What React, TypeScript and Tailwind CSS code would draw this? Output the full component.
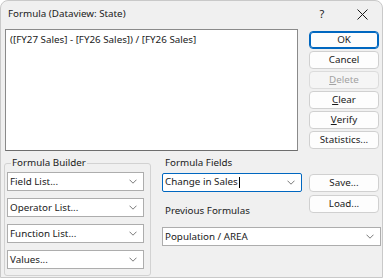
import React from "react";

const font = { fontFamily: '"Noto Sans", "Open Sans", sans-serif' };

const Chevron = () => (
  <svg width="8" height="5" viewBox="0 0 8 5" className="shrink-0">
    <path d="M0.5 0.7 L4 4.2 L7.5 0.7" fill="none" stroke="#7a7a7a" strokeWidth="1" />
  </svg>
);

const Combo = ({
  label,
  width,
  focused = false,
  caret = false,
}: {
  label: string;
  width: string;
  focused?: boolean;
  caret?: boolean;
}) => (
  <div
    className={`flex h-[19px] items-center justify-between border bg-white pl-[2px] pr-[6px] ${width} ${
      focused ? "border-[#0067c0] rounded-[2px]" : "border-[#adadad]"
    }`}
  >
    <span className="text-[9.8px] leading-none text-[#1a1a1a]">
      {label}
      {caret && <span className="ml-[1px] inline-block h-[11px] w-px bg-black align-middle" />}
    </span>
    <Chevron />
  </div>
);

const Btn = ({
  children,
  isDefault = false,
  disabled = false,
}: {
  children: React.ReactNode;
  isDefault?: boolean;
  disabled?: boolean;
}) => (
  <button
    type="button"
    className={`flex h-[18px] w-[70px] items-center justify-center rounded-[4px] border text-[9.8px] leading-none ${
      isDefault
        ? "border-[#0067c0] bg-[#fdfdfd] text-[#1a1a1a] shadow-[inset_0_0_0_1px_#0067c0]"
        : disabled
        ? "border-[#dcdcdc] bg-[#f5f5f5] text-[#a3a3a3]"
        : "border-[#d0d0d0] bg-[#fdfdfd] text-[#1a1a1a]"
    }`}
  >
    {children}
  </button>
);

export default function App() {
  return (
    <div className="h-[278px] w-[383px] bg-white" style={font}>
      <div className="flex h-[278px] w-[383px] flex-col rounded-t-[8px] border border-[#c9c9c9] bg-[#f0f0f0]">
        {/* title bar */}
        <div className="flex h-[27px] items-center pl-[7px]">
          <span className="flex-1 text-[9.8px] text-[#1a1a1a]">Formula (Dataview: State)</span>
          <span className="w-[20px] text-center text-[11px] text-[#1a1a1a]">?</span>
          <span className="ml-[20px] mr-[10px] flex w-[20px] justify-center">
            <svg width="11" height="11" viewBox="0 0 11 11">
              <path d="M0.5 0.5 L10.5 10.5 M10.5 0.5 L0.5 10.5" stroke="#1a1a1a" strokeWidth="1" />
            </svg>
          </span>
        </div>

        {/* formula + buttons */}
        <div className="flex pl-[4px] pt-[1px]">
          <div className="h-[122px] w-[293px] border border-[#8a8a8a] border-b-[#6e6e6e] bg-white px-[4px] pt-[3px] text-[9.8px] leading-[14px] text-[#1a1a1a]">
            ([FY27 Sales] - [FY26 Sales]) / [FY26 Sales]
          </div>
          <div className="ml-[11px] flex flex-col gap-[2px] pt-[2px]">
            <Btn isDefault>OK</Btn>
            <Btn>Cancel</Btn>
            <Btn disabled>
              <span className="underline">D</span>elete
            </Btn>
            <Btn>
              <span className="underline">C</span>lear
            </Btn>
            <Btn>
              <span className="underline">V</span>erify
            </Btn>
            <Btn>Statistics...</Btn>
          </div>
        </div>

        {/* bottom area */}
        <div className="mt-[4px] flex pl-[3px]">
          <fieldset className="mt-[1px] h-[120px] w-[147px] rounded-[3px] border border-[#d2d2d2] px-[2px] pt-0">
            <legend className="ml-[4px] px-[1px] text-[9.8px] leading-[14px] text-[#1a1a1a]">Formula Builder</legend>
            <div className="flex flex-col gap-[7px] pt-[2px]">
              <Combo label="Field List..." width="w-[137px]" />
              <Combo label="Operator List..." width="w-[137px]" />
              <Combo label="Function List..." width="w-[137px]" />
              <Combo label="Values..." width="w-[137px]" />
            </div>
          </fieldset>

          <div className="ml-[11px] flex flex-col">
            <span className="pl-[3px] pt-[1px] text-[9.8px] leading-[14px] text-[#1a1a1a]">Formula Fields</span>
            <div className="mt-[3px] flex items-start">
              <Combo label="Change in Sales" width="w-[140px]" focused caret />
              <div className="ml-[7px] flex flex-col gap-[3px] pt-[1px]">
                <Btn>Save...</Btn>
                <Btn>Load...</Btn>
              </div>
            </div>
            <span className="-mt-[9px] pl-[3px] text-[9.8px] leading-[14px] text-[#1a1a1a]">Previous Formulas</span>
            <div className="mt-[9px]">
              <Combo label="Population / AREA" width="w-[219px]" />
            </div>
          </div>
        </div>
      </div>
    </div>
  );
}
